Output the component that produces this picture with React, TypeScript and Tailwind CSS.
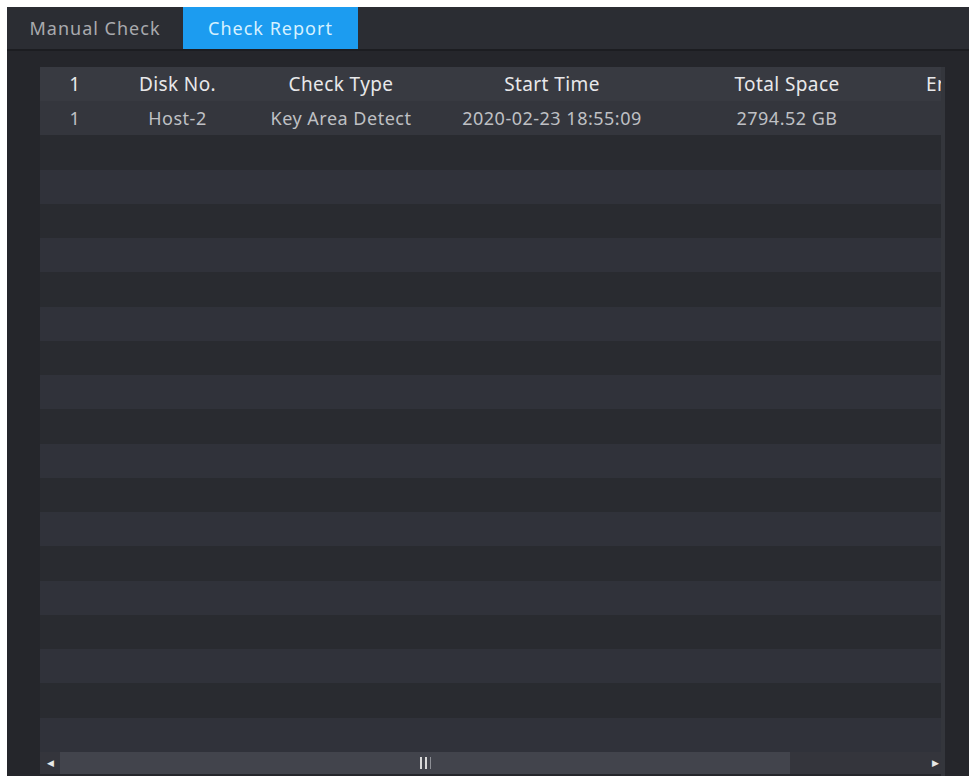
import { useState } from "react";

type Report = {
  no: string;
  disk: string;
  type: string;
  start: string;
  total: string;
  end: string;
};

const reports: Report[] = [
  {
    no: "1",
    disk: "Host-2",
    type: "Key Area Detect",
    start: "2020-02-23 18:55:09",
    total: "2794.52 GB",
    end: "",
  },
];

const columns = [
  { key: "no", label: "1", width: "w-[70px]" },
  { key: "disk", label: "Disk No.", width: "w-[135px]" },
  { key: "type", label: "Check Type", width: "w-[192px]" },
  { key: "start", label: "Start Time", width: "w-[230px]" },
  { key: "total", label: "Total Space", width: "w-[240px]" },
  { key: "end", label: "End Time", width: "w-[124px]" },
] as const;

const ROWS = 19;

export default function App() {
  const [tab, setTab] = useState("report");

  return (
    <div
      className="w-[976px] h-[776px] bg-white pt-[7px] pl-[7px] pr-[7px] overflow-hidden"
      style={{ fontFamily: '"Noto Sans", "Open Sans", sans-serif' }}
    >
      <div className="h-full bg-[#25262b] flex flex-col">
        {/* tabs */}
        <div className="h-[44px] flex bg-[#2b2d33] border-b-2 border-[#1c1d21] shrink-0">
          <button
            onClick={() => setTab("manual")}
            className={
              "w-[176px] text-[18px] tracking-[1px] " +
              (tab === "manual"
                ? "bg-[#1c9cf0] text-[#d6f1ff]"
                : "text-[#a9aaae]")
            }
          >
            Manual Check
          </button>
          <button
            onClick={() => setTab("report")}
            className={
              "w-[175px] text-[18px] tracking-[1px] " +
              (tab === "report"
                ? "bg-[#1c9cf0] text-[#d6f1ff]"
                : "text-[#a9aaae]")
            }
          >
            Check Report
          </button>
        </div>

        <div className="flex-1 pt-[16px] pl-[33px] pr-[24px] flex flex-col">
          <div className="flex-1 flex flex-col overflow-hidden border-r-[4px] border-r-[#34363c]">
            {/* header */}
            <div className="h-[34px] flex items-center bg-[#383a41] shrink-0">
              {columns.map((c) => (
                <div
                  key={c.key}
                  className={
                    c.width +
                    " shrink-0 text-center text-[19px] tracking-[0.4px] text-[#e8e8ea] whitespace-nowrap"
                  }
                >
                  {c.label}
                </div>
              ))}
            </div>

            {/* rows */}
            {Array.from({ length: ROWS }).map((_, i) => {
              const r = reports[i];
              return (
                <div
                  key={i}
                  className={
                    "h-[34.25px] flex items-center shrink-0 " +
                    (i === 0
                      ? "bg-[#34363d]"
                      : i % 2 === 0
                        ? "bg-[#30323a]"
                        : "bg-[#292b30]")
                  }
                >
                  {r &&
                    columns.map((c) => (
                      <div
                        key={c.key}
                        className={
                          c.width +
                          " shrink-0 text-center text-[18px] tracking-[0.5px] text-[#bfc0c4] whitespace-nowrap"
                        }
                      >
                        {r[c.key]}
                      </div>
                    ))}
                </div>
              );
            })}

            {/* horizontal scrollbar */}
            <div className="h-[22px] flex items-center bg-[#34353c] shrink-0 -mr-[4px]">
              <div className="w-[20px] flex justify-center text-[#e8e8e8] text-[9px]">◀</div>
              <div className="w-[730px] h-full bg-[#42444c] flex items-center justify-center">
                <div className="flex gap-[3px]">
                  <div className="w-[2px] h-[12px] bg-[#d8d8d8]" />
                  <div className="w-[2px] h-[12px] bg-[#d8d8d8]" />
                  <div className="w-[1px] h-[12px] bg-[#8d8f95]" />
                </div>
              </div>
              <div className="flex-1" />
              <div className="w-[20px] flex justify-center text-[#e8e8e8] text-[9px]">▶</div>
            </div>
          </div>
        </div>
      </div>
    </div>
  );
}
